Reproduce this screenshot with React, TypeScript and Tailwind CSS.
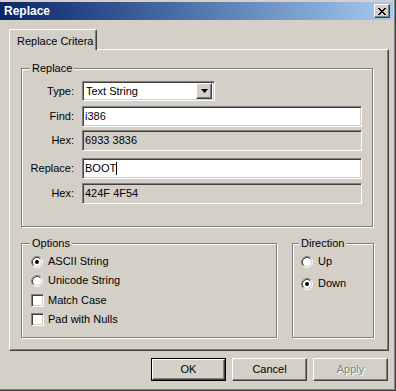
import { ReactNode } from 'react';

const sunken =
  'border border-t-[#808080] border-l-[#808080] border-b-white border-r-white shadow-[inset_1px_1px_0_#404040,inset_-1px_-1px_0_#d4d0c8]';
const raised =
  'border border-t-white border-l-white border-b-[#404040] border-r-[#404040] shadow-[inset_-1px_-1px_0_#808080]';
const etched = 'border border-[#808080] shadow-[inset_1px_1px_0_#fff,1px_1px_0_#fff]';

const Radio = ({ checked }: { checked?: boolean }) => (
  <svg width="12" height="12" viewBox="0 0 12 12">
    <circle cx="6" cy="6" r="4.5" fill="#fff" />
    <path d="M2.11 9.89 A5.5 5.5 0 0 1 9.89 2.11" fill="none" stroke="#808080" />
    <path d="M9.89 2.11 A5.5 5.5 0 0 1 2.11 9.89" fill="none" stroke="#fff" />
    <path d="M2.82 9.18 A4.5 4.5 0 0 1 9.18 2.82" fill="none" stroke="#404040" />
    <path d="M9.18 2.82 A4.5 4.5 0 0 1 2.82 9.18" fill="none" stroke="#d4d0c8" />
    {checked && <circle cx="6" cy="6" r="2" fill="#000" />}
  </svg>
);

const CloseGlyph = () => {
  // classic 8x7 pixel X
  const rows = ['XX....XX', '.XX..XX.', '..XXXX..', '...XX...', '..XXXX..', '.XX..XX.', 'XX....XX'];
  return (
    <svg width="8" height="7" viewBox="0 0 8 7" shapeRendering="crispEdges">
      {rows.flatMap((r, y) =>
        r.split('').map((c, x) => (c === 'X' ? <rect key={`${x}-${y}`} x={x} y={y} width="1" height="1" fill="#000" /> : null))
      )}
    </svg>
  );
};

const Group = ({ label, className, labelLeft = 'left-[8px]', children }: { label: string; className: string; labelLeft?: string; children?: ReactNode }) => (
  <div className={`relative ${etched} ${className}`}>
    <span className={`absolute ${labelLeft} top-[-8px] px-[2px] bg-[#d4d0c8] leading-[14px]`}>{label}</span>
    {children}
  </div>
);

const Field = ({ label, value, readOnly, className = '', cursor }: { label: string; value: string; readOnly?: boolean; className?: string; cursor?: boolean }) => (
  <div className={`flex items-center ${className}`}>
    <span className="w-[52px] text-right">{label}</span>
    <div className={`ml-[8px] w-[280px] h-[21px] flex items-center px-[2px] ${sunken} ${readOnly ? 'bg-[#d4d0c8]' : 'bg-white'}`}>
      <span>{value}</span>
      {cursor && <span className="w-px h-[13px] bg-black" />}
    </div>
  </div>
);

const Option = ({ children, icon, className = '' }: { children: ReactNode; icon: ReactNode; className?: string }) => (
  <div className={`flex items-center gap-[4px] ${className}`}>
    <div className="w-[13px] flex items-center">{icon}</div>
    <span>{children}</span>
  </div>
);

const Check = () => <div className={`w-[13px] h-[13px] bg-white ${sunken}`} />;

export default function App() {
  return (
    <div
      className="w-[396px] h-[391px] bg-[#d4d0c8] flex flex-col pt-[2px] border-r border-b border-[#404040] shadow-[inset_-1px_-1px_0_#808080] text-[11px] text-black"
      style={{ fontFamily: '"Liberation Sans", Arial, sans-serif' }}
    >
      {/* Title bar */}
      <div className="h-[18px] mr-[2px] flex items-center justify-between pl-[4px] pr-[3px] bg-gradient-to-r from-[#0a246a] to-[#a6caf0]">
        <span className="text-white font-bold text-[12px]">Replace</span>
        <button className={`w-[16px] h-[14px] flex items-center justify-center bg-[#d4d0c8] ${raised}`} aria-label="Close">
          <CloseGlyph />
        </button>
      </div>

      {/* Tab */}
      <div className="mt-[9px] ml-[9px] flex">
        <div className="relative z-10 -mb-px w-[88px] h-[21px] bg-[#d4d0c8] border-t border-l border-white border-r border-r-[#404040] shadow-[inset_-1px_0_0_#808080] pl-[7px] pt-[3px] rounded-tl-[2px] rounded-tr-[2px]">
          Replace Critera
        </div>
      </div>

      {/* Tab panel */}
      <div className="ml-[9px] w-[380px] h-[302px] border border-t-white border-l-white border-r-[#404040] border-b-[#404040] shadow-[inset_-1px_-1px_0_#808080] pt-[18px] pl-[11px]">
        <Group label="Replace" className="w-[352px] h-[159px] pt-[12px]">
          <div className="flex items-center">
            <span className="w-[52px] text-right">Type:</span>
            <div className={`ml-[8px] w-[133px] h-[20px] flex items-center bg-white ${sunken} p-[2px]`}>
              <span className="flex-1 pl-[1px]">Text String</span>
              <div className={`w-[16px] h-[16px] flex items-center justify-center bg-[#d4d0c8] ${raised}`}>
                <svg width="7" height="4" viewBox="0 0 7 4">
                  <polygon points="0,0 7,0 3.5,4" fill="#000" />
                </svg>
              </div>
            </div>
          </div>
          <Field label="Find:" value="i386" className="mt-[5px]" />
          <Field label="Hex:" value="6933 3836" readOnly className="mt-[3px]" />
          <Field label="Replace:" value="BOOT" cursor className="mt-[7px]" />
          <Field label="Hex:" value="424F 4F54" readOnly className="mt-[4px]" />
        </Group>

        <div className="mt-[16px] flex gap-[15px]">
          <Group label="Options" className="w-[256px] h-[95px] pt-[8px] pl-[9px]">
            <Option icon={<Radio checked />} className="h-[19px]">ASCII String</Option>
            <Option icon={<Radio />} className="h-[19px]">Unicode String</Option>
            <Option icon={<Check />} className="h-[20px]">Match Case</Option>
            <Option icon={<Check />} className="h-[19px]">Pad with Nulls</Option>
          </Group>
          <Group label="Direction" labelLeft="left-[6px]" className="w-[82px] h-[95px] pt-[8px] pl-[8px]">
            <Option icon={<Radio />} className="h-[19px]">Up</Option>
            <Option icon={<Radio checked />} className="h-[19px] mt-[3px]">Down</Option>
          </Group>
        </div>
      </div>

      {/* Buttons */}
      <div className="mt-[7px] pr-[7px] flex justify-end gap-[6px]">
        <button className="w-[75px] h-[23px] border border-black bg-[#d4d0c8]">
          <div className={`w-full h-full flex items-center justify-center ${raised}`}>OK</div>
        </button>
        <button className={`w-[75px] h-[23px] flex items-center justify-center bg-[#d4d0c8] ${raised}`}>Cancel</button>
        <button
          disabled
          className={`w-[75px] h-[23px] flex items-center justify-center bg-[#d4d0c8] text-[#808080] [text-shadow:1px_1px_0_#fff] ${raised}`}
        >
          Apply
        </button>
      </div>
    </div>
  );
}
